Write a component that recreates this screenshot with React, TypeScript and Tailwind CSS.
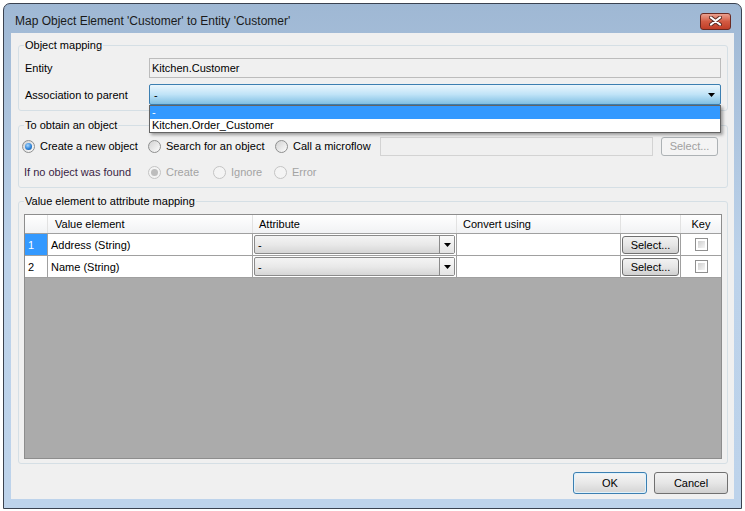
import React from 'react';

const Arrow = () => (
  <svg width="7" height="4" viewBox="0 0 7 4">
    <path d="M0 0h7L3.5 4z" fill="#000" />
  </svg>
);

function Radio({ checked, disabled }: { checked?: boolean; disabled?: boolean }) {
  return (
    <span
      className={
        disabled
          ? 'w-[13px] h-[13px] shrink-0 rounded-full border border-[#c4c4c4] bg-[#f4f4f4] flex items-center justify-center'
          : 'w-[13px] h-[13px] shrink-0 rounded-full border border-[#8e8f8f] bg-gradient-to-br from-[#d2d2d2] to-[#fcfcfc] flex items-center justify-center'
      }
    >
      {checked && (
        <span
          className={
            disabled
              ? 'w-[7px] h-[7px] rounded-full bg-[#bdbdbd]'
              : 'w-[7px] h-[7px] rounded-full bg-[radial-gradient(circle_at_40%_35%,#a8d8ff,#2f83d8_55%,#0c4a8c)]'
          }
        />
      )}
    </span>
  );
}

function WinButton({ label, className = '' }: { label: string; className?: string }) {
  return (
    <div
      className={`flex items-center justify-center rounded-[3px] border border-[#707070] bg-gradient-to-b from-[#f2f2f2] via-[#e6e6e6] to-[#d0d0d0] text-black ${className}`}
    >
      {label}
    </div>
  );
}

function AttrCombo() {
  return (
    <div className="flex h-full w-full border border-[#8a8a8a] rounded-[2px] bg-gradient-to-b from-[#f4f4f4] via-[#e9e9e9] to-[#d6d6d6]">
      <div className="flex-1 pl-[3px] flex items-center">-</div>
      <div className="w-[15px] border-l border-[#8a8a8a] bg-gradient-to-b from-[#fafafa] to-[#e4e4e4] flex items-center justify-center">
        <Arrow />
      </div>
    </div>
  );
}

function Checkbox() {
  return (
    <span className="w-[13px] h-[13px] border border-[#8f8f8f] bg-white p-[2px] flex">
      <span className="flex-1 bg-gradient-to-br from-[#cfcfcf] to-[#f6f6f6]" />
    </span>
  );
}

const rows = [
  { n: '1', name: 'Address (String)', active: true },
  { n: '2', name: 'Name (String)', active: false },
];

export default function App() {
  return (
    <div className="w-[745px] h-[511px] bg-white pt-[3px] pl-[3px] font-['Liberation_Sans',Arial,sans-serif] text-[11px] text-black leading-[14px]">
      <div className="w-[739px] h-[506px] border border-[#3a4250] rounded-t-[7px] bg-gradient-to-b from-[#9fb8d4] via-[#bcd2ea] to-[#bdd3eb] flex flex-col">
        {/* title bar */}
        <div className="h-[29px] flex items-center pl-[11px] pt-[5px]">
          <span className="text-[12px] text-[#1a1a1a]">Map Object Element 'Customer' to Entity 'Customer'</span>
          <div className="ml-auto mr-[10px] w-[31px] h-[17px] rounded-[3px] border border-[#6b2a22] bg-gradient-to-b from-[#eaa08f] via-[#d35a42] to-[#c03e27] flex items-center justify-center">
            <svg width="13" height="10" viewBox="0 0 13 10">
              <path d="M2 1.5l9 7M11 1.5l-9 7" stroke="#5a2a22" strokeWidth="4" strokeLinecap="round" />
              <path d="M2 1.5l9 7M11 1.5l-9 7" stroke="#fff" strokeWidth="2.2" strokeLinecap="round" />
            </svg>
          </div>
        </div>

        {/* client area */}
        <div className="mx-[7px] h-[466px] bg-[#f0f0f0] pl-[7px] pr-[6px] pt-[5px] flex flex-col">
          {/* Object mapping */}
          <fieldset className="border border-[#d5dfe5] rounded-[3px] h-[73px] pl-[6px] pr-[6px]">
            <legend className="-ml-[1px] px-[1px] leading-[14px]">Object mapping</legend>
            <div className="mt-[6px] flex items-center h-[20px]">
              <span className="w-[124px]">Entity</span>
              <div className="flex-1 h-[20px] border border-[#bcbcbc] bg-[#f0f0f0] pl-[2px] flex items-center">Kitchen.Customer</div>
            </div>
            <div className="mt-[6px] flex items-center h-[21px]">
              <span className="w-[124px]">Association to parent</span>
              <div className="relative flex-1 h-[21px]">
                <div className="h-full border border-[#3c7fb1] rounded-[2px] bg-gradient-to-b from-[#eaf6fd] via-[#bfe3f7] to-[#7fbfe3] flex items-center pl-[4px] pr-[5px]">
                  <span className="flex-1">-</span>
                  <Arrow />
                </div>
                <div className="absolute left-0 top-full w-[572px] border border-[#646464] bg-white shadow-[2px_2px_3px_rgba(0,0,0,0.35)] z-10">
                  <div className="h-[13px] bg-[#3399ff] text-white pl-[2px] leading-[13px]">-</div>
                  <div className="h-[13px] pl-[2px] leading-[13px]">Kitchen.Order_Customer</div>
                </div>
              </div>
            </div>
          </fieldset>

          {/* To obtain an object */}
          <fieldset className="mt-[7px] border border-[#d5dfe5] rounded-[3px] h-[70px] pl-[3px] pr-[6px]">
            <legend className="ml-[2px] px-[1px] leading-[14px]">To obtain an object</legend>
            <div className="mt-[4px] flex items-center h-[20px]">
              <label className="w-[126px] flex items-center gap-[5px]">
                <Radio checked />
                <span>Create a new object</span>
              </label>
              <label className="w-[127px] flex items-center gap-[5px]">
                <Radio />
                <span>Search for an object</span>
              </label>
              <label className="w-[105px] flex items-center gap-[5px]">
                <Radio />
                <span>Call a microflow</span>
              </label>
              <div className="w-[273px] h-[19px] border border-[#d3d3d3] bg-[#f0f0f0]" />
              <WinButton
                label="Select..."
                className="ml-[8px] w-[57px] h-[19px] !border-[#adb2b5] !from-[#f4f4f4] !via-[#f4f4f4] !to-[#f4f4f4] !text-[#a0a0a0]"
              />
            </div>
            <div className="mt-[6px] flex items-center h-[20px]">
              <span className="w-[126px] pl-[2px] text-[#3a1f45]">If no object was found</span>
              <label className="w-[65px] flex items-center gap-[5px] text-[#a3a3a3]">
                <Radio checked disabled />
                <span>Create</span>
              </label>
              <label className="w-[61px] flex items-center gap-[5px] text-[#a3a3a3]">
                <Radio disabled />
                <span>Ignore</span>
              </label>
              <label className="flex items-center gap-[5px] text-[#a3a3a3]">
                <Radio disabled />
                <span>Error</span>
              </label>
            </div>
          </fieldset>

          {/* Value element to attribute mapping */}
          <fieldset className="mt-[6px] border border-[#d5dfe5] rounded-[3px] h-[270px] pl-[5px] pr-[5px]">
            <legend className="px-[1px] leading-[14px]">Value element to attribute mapping</legend>
            <div className="mt-[6px] h-[245px] border border-[#8d8d8d] bg-[#ababab] flex flex-col">
              <div className="flex h-[19px] border-b border-[#a0a0a0] bg-gradient-to-b from-white to-[#f1f2f4]">
                <div className="w-[23px] border-r border-[#e2e2e2]" />
                <div className="w-[205px] border-r border-[#e2e2e2] pl-[7px] flex items-center">Value element</div>
                <div className="w-[204px] border-r border-[#e2e2e2] pl-[6px] flex items-center">Attribute</div>
                <div className="w-[164px] border-r border-[#e2e2e2] pl-[6px] flex items-center">Convert using</div>
                <div className="w-[60px] border-r border-[#e2e2e2]" />
                <div className="flex-1 flex items-center justify-center">Key</div>
              </div>
              {rows.map((r) => (
                <div key={r.n} className="flex h-[22px] border-b border-[#a0a0a0] bg-white">
                  <div
                    className={
                      r.active
                        ? 'w-[23px] border-r border-[#a0a0a0] bg-[#3399ff] text-white pl-[3px] flex items-center'
                        : 'w-[23px] border-r border-[#a0a0a0] pl-[3px] flex items-center'
                    }
                  >
                    {r.n}
                  </div>
                  <div className="w-[205px] border-r border-[#a0a0a0] pl-[3px] flex items-center">{r.name}</div>
                  <div className="w-[204px] border-r border-[#a0a0a0] p-[1px]">
                    <AttrCombo />
                  </div>
                  <div className="w-[164px] border-r border-[#a0a0a0]" />
                  <div className="w-[60px] border-r border-[#a0a0a0] flex items-center justify-center">
                    <WinButton label="Select..." className="w-[57px] h-[18px]" />
                  </div>
                  <div className="flex-1 flex items-center justify-center">
                    <Checkbox />
                  </div>
                </div>
              ))}
            </div>
          </fieldset>

          {/* dialog buttons */}
          <div className="mt-[8px] flex justify-end gap-[7px]">
            <div className="w-[74px] h-[22px] rounded-[3px] border border-[#3c7fb1] p-[1px] bg-[#dff2fc]">
              <div className="h-full rounded-[2px] bg-gradient-to-b from-[#f4f4f4] via-[#e8e8e8] to-[#d6d6d6] flex items-center justify-center">OK</div>
            </div>
            <WinButton label="Cancel" className="w-[74px] h-[22px]" />
          </div>
        </div>
      </div>
    </div>
  );
}
